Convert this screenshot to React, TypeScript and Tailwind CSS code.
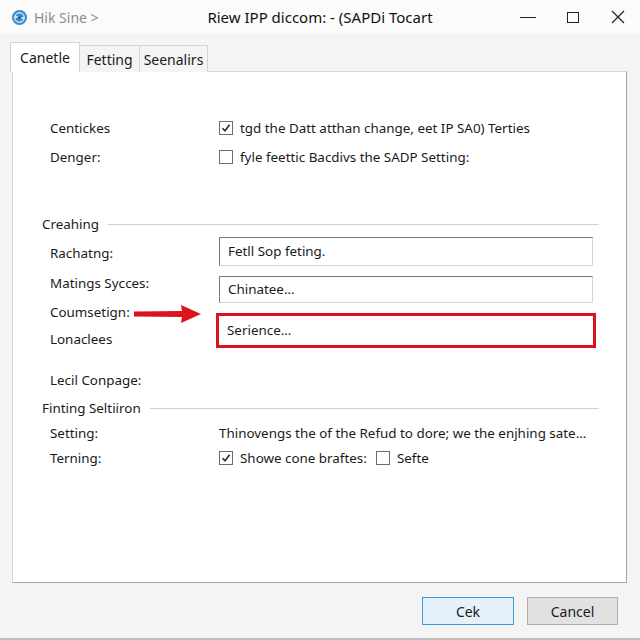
import React from "react";

function Check({ checked }: { checked?: boolean }) {
  return (
    <span className="w-[14px] h-[14px] border border-[#6d6d6d] bg-white flex items-center justify-center shrink-0">
      {checked && (
        <svg width="10" height="10" viewBox="0 0 10 10">
          <path d="M1.5 5.2 L4 7.8 L8.6 1.8" fill="none" stroke="#1f2a44" strokeWidth="1.6" />
        </svg>
      )}
    </span>
  );
}

function GroupHeader({ title }: { title: string }) {
  return (
    <div className="h-[20px] flex items-center pl-[29px] pr-[27px] gap-[9px]">
      <span className="whitespace-nowrap">{title}</span>
      <span className="flex-1 h-px bg-[#cfcfcf]" />
    </div>
  );
}

function Row({ label, children }: { label: string; children?: React.ReactNode }) {
  return (
    <div className="flex items-center h-[20px]">
      <div className="w-[206px] pl-[37px] shrink-0 whitespace-nowrap">{label}</div>
      <div className="flex items-center gap-[7px] whitespace-nowrap">{children}</div>
    </div>
  );
}

function TextBox({ value, className }: { value: string; className: string }) {
  return (
    <div
      className={`w-[374px] border border-t-[#7a7a7a] border-l-[#7a7a7a] border-r-[#d4d4d4] border-b-[#d4d4d4] bg-white flex items-center pl-[8px] ${className}`}
    >
      {value}
    </div>
  );
}

export default function App() {
  return (
    <div className="w-[640px] h-[640px] bg-[#bdbdbd] font-['Noto_Sans',sans-serif] text-[13px] text-[#1a1a1a]">
      <div className="h-[638px] bg-[#f4f4f4] flex flex-col">
        {/* title bar */}
        <div className="h-[34px] bg-[#fbfbfb] grid grid-cols-[1fr_auto_1fr] items-center">
          <div className="flex items-center pl-[11px] gap-[6px]">
            <svg width="17" height="17" viewBox="0 0 18 18">
              <circle cx="9" cy="9" r="8" fill="#3b8ccf" />
              <circle cx="9" cy="9" r="5" fill="none" stroke="#cfe6f7" strokeWidth="1.4" />
              <path d="M4 9 C7 6 11 12 14 9" fill="none" stroke="#ffffff" strokeWidth="1.4" />
              <circle cx="9" cy="9" r="1.6" fill="#1d5e95" />
            </svg>
            <span className="text-[#8d8d8d] text-[14px]">Hik Sine &gt;</span>
          </div>
          <div className="text-[15px] text-[#111]">Riew IPP diccom: - (SAPDi Tocart</div>
          <div className="flex justify-end h-full">
            <div className="w-[45px] h-full flex items-center justify-center">
              <span className="w-[16px] h-px bg-[#222]" />
            </div>
            <div className="w-[45px] h-full flex items-center justify-center">
              <span className="w-[12px] h-[11px] border border-[#222]" />
            </div>
            <div className="w-[45px] h-full flex items-center justify-center">
              <svg width="14" height="14" viewBox="0 0 14 14">
                <path d="M1 1 L13 13 M13 1 L1 13" stroke="#222" strokeWidth="1.2" />
              </svg>
            </div>
          </div>
        </div>

        {/* tabs */}
        <div className="mt-[8px] pl-[10px] flex items-end relative z-10 -mb-px text-[14px]">
          <div className="w-[70px] h-[30px] bg-white border border-b-0 border-[#d6d6d6] flex items-center justify-center">
            Canetle
          </div>
          <div className="w-[60px] h-[27px] bg-[#f4f4f4] border border-l-0 border-b-0 border-[#d6d6d6] flex items-center justify-center">
            Fetting
          </div>
          <div className="w-[68px] h-[27px] bg-[#f4f4f4] border border-l-0 border-b-0 border-[#d6d6d6] flex items-center justify-center">
            Seenalirs
          </div>
        </div>

        {/* panel */}
        <div className="ml-[12px] w-[615px] h-[512px] bg-white border border-[#d6d6d6] border-r-[#a3a3a3] border-b-[#a3a3a3] text-[13.4px]">
          <div className="mt-[42px]">
            <div className="h-[29px] flex items-center">
              <div className="w-[206px] pl-[37px] shrink-0">Centickes</div>
              <div className="flex items-center gap-[7px] whitespace-nowrap">
                <Check checked />
                <span>tgd the Datt atthan change, eet IP SA0) Terties</span>
              </div>
            </div>
            <div className="h-[29px] flex items-center">
              <div className="w-[206px] pl-[37px] shrink-0">Denger:</div>
              <div className="flex items-center gap-[7px] whitespace-nowrap">
                <Check />
                <span>fyle feettic Bacdivs the SADP Setting:</span>
              </div>
            </div>
          </div>

          <div className="mt-[42px]">
            <GroupHeader title="Creahing" />
          </div>

          <div className="flex relative">
            <div className="w-[206px] pl-[37px] shrink-0 flex flex-col">
              <div className="h-[20px] mt-[9px] flex items-center">Rachatng:</div>
              <div className="h-[20px] mt-[10px] flex items-center">Matings Syсces:</div>
              <div className="h-[20px] mt-[9px] flex items-center">Coumsetign:</div>
              <div className="h-[20px] mt-[7px] flex items-center">Lonaclees</div>
            </div>
            <div className="flex flex-col">
              <TextBox value="Fetll Sop feting." className="mt-[3px] h-[29px]" />
              <TextBox value="Chinatee..." className="mt-[10px] h-[27px]" />
              <div className="mt-[10px] -ml-[3px] w-[380px] h-[35px] border-[3px] border-[#d9141c] bg-white flex items-center pl-[8px]">
                Serience...
              </div>
            </div>
            <svg className="absolute left-[121px] top-[69px]" width="68" height="22" viewBox="0 0 68 22">
              <path d="M0 8.5 L48 8 L47 2 L67 11 L47 20 L48 14 L0 13.5 Z" fill="#d9141c" />
            </svg>
          </div>

          <div className="mt-[21px]">
            <Row label="Lecil Conpage:" />
          </div>

          <div className="mt-[8px]">
            <GroupHeader title="Finting Seltiiron" />
          </div>

          <div className="mt-[5px]">
            <Row label="Setting:">
              <span>Thinovengs the of the Refud to dore; we the enjhing sate...</span>
            </Row>
          </div>
          <div className="mt-[5px]">
            <Row label="Terning:">
              <Check checked />
              <span>Showe cone braftes:</span>
              <span className="ml-[2px]">
                <Check />
              </span>
              <span>Sefte</span>
            </Row>
          </div>
        </div>

        {/* buttons */}
        <div className="mt-[14px] flex justify-end pr-[22px] gap-[13px] text-[14px]">
          <button className="w-[92px] h-[28px] bg-[#e5f1fb] border border-[#3a9bd5] flex items-center justify-center">
            Cek
          </button>
          <button className="w-[91px] h-[28px] bg-[#e1e1e1] border border-[#adadad] flex items-center justify-center">
            Cancel
          </button>
        </div>
      </div>
    </div>
  );
}
